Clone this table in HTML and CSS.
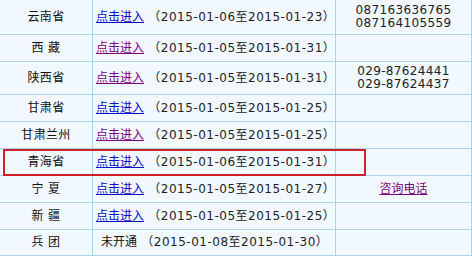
FILE: index.html
```html
<!DOCTYPE html>
<html lang="zh-CN">
<head>
<meta charset="utf-8">
<title>报名入口</title>
<link rel="stylesheet" href="styles.css">
</head>
<body>
<div class="wrap">
  <div class="grid">
    <div class="cell name">云南省</div>
    <div class="cell info"><a class="lnk" href="#">点击进入</a> （2015-01-06至2015-01-23）</div>
    <div class="cell tel">087163636765<br>087164105559</div>

    <div class="cell name">西 藏</div>
    <div class="cell info"><a class="lnk visited" href="#">点击进入</a> （2015-01-05至2015-01-31）</div>
    <div class="cell tel"></div>

    <div class="cell name">陕西省</div>
    <div class="cell info"><a class="lnk visited" href="#">点击进入</a> （2015-01-05至2015-01-31）</div>
    <div class="cell tel">029-87624441<br>029-87624437</div>

    <div class="cell name">甘肃省</div>
    <div class="cell info"><a class="lnk" href="#">点击进入</a> （2015-01-05至2015-01-25）</div>
    <div class="cell tel"></div>

    <div class="cell name">甘肃兰州</div>
    <div class="cell info"><a class="lnk visited" href="#">点击进入</a> （2015-01-05至2015-01-25）</div>
    <div class="cell tel"></div>

    <div class="cell name">青海省</div>
    <div class="cell info"><a class="lnk" href="#">点击进入</a> （2015-01-06至2015-01-31）</div>
    <div class="cell tel"></div>

    <div class="cell name">宁 夏</div>
    <div class="cell info"><a class="lnk" href="#">点击进入</a> （2015-01-05至2015-01-27）</div>
    <div class="cell tel"><a class="lnk visited" href="#">咨询电话</a></div>

    <div class="cell name">新 疆</div>
    <div class="cell info"><a class="lnk" href="#">点击进入</a> （2015-01-05至2015-01-25）</div>
    <div class="cell tel"></div>

    <div class="cell name">兵 团</div>
    <div class="cell info"><span class="closed">未开通</span> （2015-01-08至2015-01-30）</div>
    <div class="cell tel"></div>
  </div>
  <div class="mark"></div>
</div>
</body>
</html>
```

FILE: styles.css
```css
html, body {
  margin: 0;
  padding: 0;
  background: #f1f8ff;
}

.wrap {
  position: relative;
  width: 472px;
  height: 256px;
  overflow: hidden;
}

.grid {
  display: grid;
  grid-template-columns: 92px 242px 135px;
  grid-template-rows: 34px 26px 32px 26px 26px 26px 26px 26px 25px;
  gap: 1px;
  padding: 0 1px 1px 0;
  background: #a9d3ef;
  font-family: "DejaVu Sans", "Noto Sans CJK SC", sans-serif;
  font-size: 12px;
  letter-spacing: 0.5px;
  line-height: 13px;
  color: #222;
}

.cell {
  background: #f1f8ff;
  display: flex;
  align-items: center;
  white-space: pre;
}

.name {
  justify-content: center;
  color: #111;
  letter-spacing: 0.35px;
}

.info {
  padding-left: 3px;
}

.tel {
  justify-content: center;
  text-align: center;
  letter-spacing: 0.35px;
}

.lnk {
  color: #0a0ac8;
  text-decoration: underline;
  letter-spacing: 0;
}

.lnk.visited {
  color: #800080;
}

.closed {
  margin-left: 5px;
  color: #111;
  letter-spacing: 0;
}

.mark {
  position: absolute;
  left: 3px;
  top: 149px;
  width: 363px;
  height: 27px;
  box-sizing: border-box;
  border: 2px solid #cc2229;
}
```
